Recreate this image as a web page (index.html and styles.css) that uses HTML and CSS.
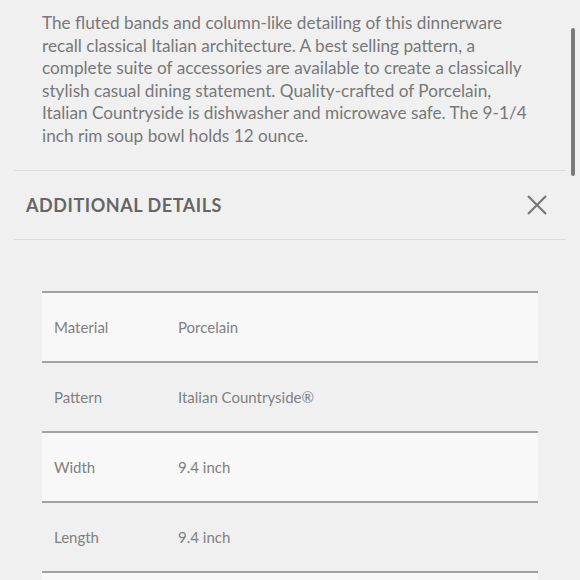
FILE: index.html
```html
<!DOCTYPE html>
<html lang="en">
<head>
<meta charset="utf-8">
<title>Additional Details</title>
<link rel="stylesheet" href="styles.css">
</head>
<body>
<div class="page">
  <div class="desc">
    <p>The fluted bands and column-like detailing of this dinnerware<br>recall classical Italian architecture. A best selling pattern, a<br>complete suite of accessories are available to create a classically<br>stylish casual dining statement. Quality-crafted of Porcelain,<br>Italian Countryside is dishwasher and microwave safe. The 9-1/4<br>inch rim soup bowl holds 12 ounce.</p>
  </div>
  <div class="header">
    <h2>ADDITIONAL DETAILS</h2>
    <svg class="close" width="20" height="20" viewBox="0 0 20 20"><path d="M1 1 L19 19 M19 1 L1 19" stroke="#767676" stroke-width="2.2" fill="none"/></svg>
  </div>
  <div class="specs">
    <div class="row light"><span class="label">Material</span><span class="value">Porcelain</span></div>
    <div class="row"><span class="label">Pattern</span><span class="value">Italian Countryside®</span></div>
    <div class="row light"><span class="label">Width</span><span class="value">9.4 inch</span></div>
    <div class="row"><span class="label">Length</span><span class="value">9.4 inch</span></div>
    <div class="row light"></div>
  </div>
</div>
<div class="scrollbar"></div>
</body>
</html>
```
FILE: styles.css
```css
html, body {
  margin: 0;
  padding: 0;
  background: #f0f0f0;
  height: 580px;
  overflow: hidden;
}
body {
  font-family: "Lato", "Open Sans", sans-serif;
  color: #787878;
}
.page {
  padding: 0 14px;
}
.desc {
  padding: 12px 28px 23px 28px;
}
.desc p {
  margin: 0;
  font-size: 17.2px;
  letter-spacing: 0;
  line-height: 22.5px;
  white-space: nowrap;
}
.header {
  display: flex;
  align-items: center;
  justify-content: space-between;
  border-top: 1px solid #dcdcdc;
  border-bottom: 1px solid #dcdcdc;
  height: 68px;
  padding: 0 19px 0 12px;
}
.header h2 {
  margin: 0;
  font-size: 18px;
  font-weight: 700;
  color: #666;
  letter-spacing: 0.55px;
}
.close {
  display: block;
}
.specs {
  margin: 51px 28px 0 28px;
}
.row {
  display: flex;
  align-items: center;
  height: 68px;
  border-top: 2px solid #a2a2a2;
  padding-left: 12px;
  font-size: 15px;
  color: #808080;
}
.row.light {
  background: #f8f8f8;
}
.label {
  width: 124px;
}
.scrollbar {
  position: absolute;
  top: 28px;
  left: 571px;
  width: 4px;
  height: 148px;
  border-radius: 2px;
  background: #7a7a7a;
}
```
